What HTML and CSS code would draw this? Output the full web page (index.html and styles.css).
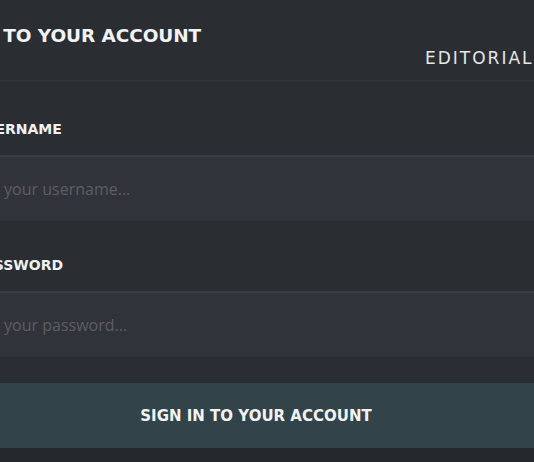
FILE: index.html
```html
<!DOCTYPE html>
<html>
<head>
<meta charset="utf-8">
<link rel="stylesheet" href="styles.css">
</head>
<body>
<div class="panel">
  <header class="head">
    <h1 class="title">SIGN IN TO YOUR ACCOUNT</h1>
    <span class="brand">EDITORIALS</span>
  </header>
  <form class="form">
    <label class="label" for="u">USERNAME</label>
    <input class="field" id="u" type="text" placeholder="Enter your username...">
    <label class="label" for="p">PASSWORD</label>
    <input class="field" id="p" type="password" placeholder="Enter your password...">
    <button class="submit" type="button">SIGN IN TO YOUR ACCOUNT</button>
  </form>
</div>
</body>
</html>
```
FILE: styles.css
```css
html, body {
  margin: 0;
  padding: 0;
  background: #25282d;
  overflow: hidden;
  width: 534px;
  height: 462px;
}
.panel {
  margin-left: -40px;
  width: 592px;
  background: #2a2d32;
  font-family: "DejaVu Sans", sans-serif;
}
.head {
  height: 81px;
  border-bottom: 1px solid #33363b;
  display: flex;
  flex-direction: column;
  box-sizing: border-box;
}
.title {
  margin: 25px 0 0 -42px;
  font-size: 18.5px;
  line-height: 22px;
  font-weight: 700;
  color: #f2f3f5;
  letter-spacing: -0.1px;
}
.brand {
  margin: 1px 0 0 465px;
  font-size: 17px;
  letter-spacing: 2px;
  color: #e4e6e8;
  white-space: nowrap;
}
.form {
  display: flex;
  flex-direction: column;
  padding-top: 40px;
}
.label {
  margin-left: 14px;
  font-size: 14px;
  line-height: 16px;
  font-weight: 700;
  color: #f0f1f3;
  margin-bottom: 18px;
}
.field {
  height: 66px;
  border: 0;
  border-top: 2px solid #393c41;
  background: #303339;
  box-sizing: border-box;
  padding: 0 0 0 0;
  font-family: "Open Sans", sans-serif;
  font-size: 16px;
  color: #ddd;
  margin-bottom: 36px;
  outline: none;
}
.field::placeholder {
  color: #5c5f64;
}
.submit {
  margin-top: -10px;
  height: 65px;
  border: 0;
  background: #33434a;
  color: #f1f3f4;
  font-family: "DejaVu Sans", sans-serif;
  font-weight: 700;
  font-size: 15px;
}
```
